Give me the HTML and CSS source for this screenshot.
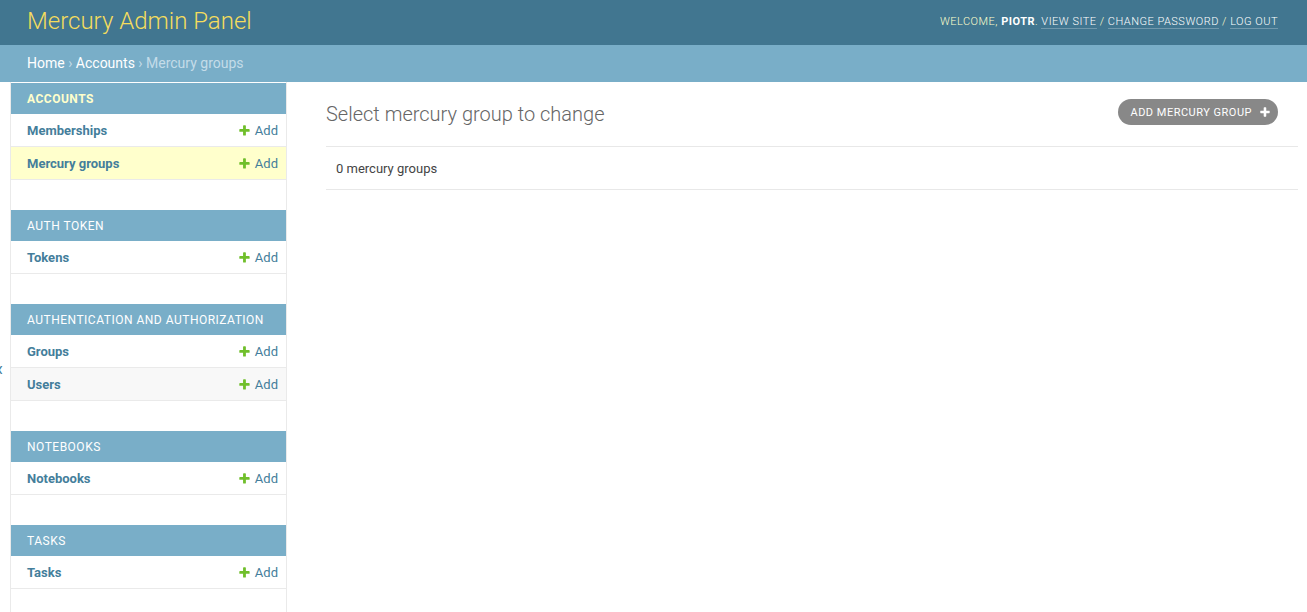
FILE: index.html
```html
<!DOCTYPE html>
<html lang="en">
<head>
<meta charset="utf-8">
<title>Select mercury group to change | Mercury Admin Panel</title>
<link rel="stylesheet" href="styles.css">
</head>
<body>
<div class="page">
  <header class="header">
    <h1 class="branding">Mercury Admin Panel</h1>
    <div class="user-tools">
      Welcome, <strong>piotr</strong>.
      <a href="#">View site</a> /
      <a href="#">Change password</a> /
      <a href="#">Log out</a>
    </div>
  </header>
  <nav class="breadcrumbs">
    <a href="#">Home</a> › <a href="#">Accounts</a> › <span class="current">Mercury groups</span>
  </nav>
  <div class="main">
    <div class="toggle-strip"><button class="toggle">«</button></div>
    <aside class="sidebar">
      <div class="module">
        <div class="caption current-app">Accounts</div>
        <div class="row"><a class="model" href="#">Memberships</a><a class="addlink" href="#"><svg class="plus" viewBox="150 150 1500 1500"><path d="M1600 796v192q0 40-28 68t-68 28h-416v416q0 40-28 68t-68 28h-192q-40 0-68-28t-28-68v-416h-416q-40 0-68-28t-28-68v-192q0-40 28-68t68-28h416v-416q0-40 28-68t68-28h192q40 0 68 28t28 68v416h416q40 0 68 28t28 68z"/></svg>Add</a></div>
        <div class="row selected"><a class="model" href="#">Mercury groups</a><a class="addlink" href="#"><svg class="plus" viewBox="150 150 1500 1500"><path d="M1600 796v192q0 40-28 68t-68 28h-416v416q0 40-28 68t-68 28h-192q-40 0-68-28t-28-68v-416h-416q-40 0-68-28t-28-68v-192q0-40 28-68t68-28h416v-416q0-40 28-68t68-28h192q40 0 68 28t28 68v416h416q40 0 68 28t28 68z"/></svg>Add</a></div>
      </div>
      <div class="module">
        <div class="caption">Auth Token</div>
        <div class="row"><a class="model" href="#">Tokens</a><a class="addlink" href="#"><svg class="plus" viewBox="150 150 1500 1500"><path d="M1600 796v192q0 40-28 68t-68 28h-416v416q0 40-28 68t-68 28h-192q-40 0-68-28t-28-68v-416h-416q-40 0-68-28t-28-68v-192q0-40 28-68t68-28h416v-416q0-40 28-68t68-28h192q40 0 68 28t28 68v416h416q40 0 68 28t28 68z"/></svg>Add</a></div>
      </div>
      <div class="module">
        <div class="caption">Authentication and Authorization</div>
        <div class="row"><a class="model" href="#">Groups</a><a class="addlink" href="#"><svg class="plus" viewBox="150 150 1500 1500"><path d="M1600 796v192q0 40-28 68t-68 28h-416v416q0 40-28 68t-68 28h-192q-40 0-68-28t-28-68v-416h-416q-40 0-68-28t-28-68v-192q0-40 28-68t68-28h416v-416q0-40 28-68t68-28h192q40 0 68 28t28 68v416h416q40 0 68 28t28 68z"/></svg>Add</a></div>
        <div class="row alt"><a class="model" href="#">Users</a><a class="addlink" href="#"><svg class="plus" viewBox="150 150 1500 1500"><path d="M1600 796v192q0 40-28 68t-68 28h-416v416q0 40-28 68t-68 28h-192q-40 0-68-28t-28-68v-416h-416q-40 0-68-28t-28-68v-192q0-40 28-68t68-28h416v-416q0-40 28-68t68-28h192q40 0 68 28t28 68v416h416q40 0 68 28t28 68z"/></svg>Add</a></div>
      </div>
      <div class="module">
        <div class="caption">Notebooks</div>
        <div class="row"><a class="model" href="#">Notebooks</a><a class="addlink" href="#"><svg class="plus" viewBox="150 150 1500 1500"><path d="M1600 796v192q0 40-28 68t-68 28h-416v416q0 40-28 68t-68 28h-192q-40 0-68-28t-28-68v-416h-416q-40 0-68-28t-28-68v-192q0-40 28-68t68-28h416v-416q0-40 28-68t68-28h192q40 0 68 28t28 68v416h416q40 0 68 28t28 68z"/></svg>Add</a></div>
      </div>
      <div class="module">
        <div class="caption">Tasks</div>
        <div class="row"><a class="model" href="#">Tasks</a><a class="addlink" href="#"><svg class="plus" viewBox="150 150 1500 1500"><path d="M1600 796v192q0 40-28 68t-68 28h-416v416q0 40-28 68t-68 28h-192q-40 0-68-28t-28-68v-416h-416q-40 0-68-28t-28-68v-192q0-40 28-68t68-28h416v-416q0-40 28-68t68-28h192q40 0 68 28t28 68v416h416q40 0 68 28t28 68z"/></svg>Add</a></div>
      </div>
    </aside>
    <main class="content">
      <div class="title-row">
        <h1 class="page-title">Select mercury group to change</h1>
        <a class="tool-add" href="#">Add mercury group<svg class="tool-plus" viewBox="150 150 1500 1500"><path d="M1600 796v192q0 40-28 68t-68 28h-416v416q0 40-28 68t-68 28h-192q-40 0-68-28t-28-68v-416h-416q-40 0-68-28t-28-68v-192q0-40 28-68t68-28h416v-416q0-40 28-68t68-28h192q40 0 68 28t28 68v416h416q40 0 68 28t28 68z"/></svg></a>
      </div>
      <p class="paginator">0 mercury groups</p>
    </main>
  </div>
</div>
</body>
</html>
```
FILE: styles.css
```css
* { box-sizing: border-box; }
html, body { margin: 0; padding: 0; }
body {
  font-family: Roboto, "Liberation Sans", sans-serif;
  color: #333;
  background: #fff;
  font-size: 14px;
}
a { text-decoration: none; }
.page {
  display: flex;
  flex-direction: column;
  min-height: 100vh;
}
.header {
  background: #417690;
  height: 45px;
  padding: 0 29px 0 27px;
  display: flex;
  align-items: center;
  justify-content: space-between;
}
.branding {
  margin: 0;
  font-size: 24px;
  font-weight: 300;
  line-height: 25px;
  color: #f5dd5d;
  position: relative;
  top: -1px;
}
.user-tools {
  font-size: 11px;
  font-weight: 300;
  letter-spacing: 0.5px;
  text-transform: uppercase;
  color: #ffc;
  line-height: 14px;
  margin-top: -2px;
}
.user-tools strong { font-weight: 700; color: #fff; }
.user-tools a {
  color: #fff;
  border-bottom: 1px solid rgba(255,255,255,0.25);
}
.breadcrumbs {
  background: #79aec8;
  height: 37px;
  padding: 10px 27px;
  font-size: 14px;
  line-height: 17px;
  color: #c4dce8;
}
.breadcrumbs a { color: #fff; }
.breadcrumbs .current { color: #c4dce8; }
.main {
  flex: 1;
  display: flex;
}
.toggle-strip {
  flex: 0 0 11px;
  overflow: hidden;
  border-right: 1px solid #eaeaea;
  display: flex;
  padding-top: 36px;
}
.toggle {
  flex: 0 0 23px;
  margin-left: -13px;
  border: 0;
  background: #fff;
  padding: 0;
  font-family: Roboto, "Liberation Sans", sans-serif;
  font-size: 20px;
  color: #447e9b;
  display: flex;
  align-items: center;
  justify-content: center;
}
.sidebar {
  flex: 0 0 276px;
  border-right: 1px solid #eaeaea;
  padding-top: 1px;
}
.module { margin-bottom: 30px; }
.caption {
  background: #79aec8;
  color: #fff;
  font-size: 12px;
  line-height: 15px;
  padding: 9px 8px 7px 16px;
  text-transform: uppercase;
  letter-spacing: 0.5px;
  font-weight: 400;
  white-space: nowrap;
}
.caption.current-app {
  color: #ffc;
  font-weight: 700;
}
.row {
  display: flex;
  justify-content: space-between;
  align-items: center;
  padding: 9px 8px 7px 16px;
  line-height: 16px;
  font-size: 13px;
  border-bottom: 1px solid #eaeaea;
}
.row.selected { background: #ffc; }
.row.alt { background: #f8f8f8; }
.model {
  color: #447e9b;
  font-weight: 700;
}
.addlink {
  color: #447e9b;
  display: flex;
  align-items: center;
}
.plus {
  width: 11px;
  height: 11px;
  margin-right: 5px;
  margin-top: -1px;
  fill: #70bf2b;
}
.content {
  flex: 1;
  padding: 20px 9px 0 39px;
}
.title-row {
  display: flex;
  justify-content: space-between;
  align-items: flex-start;
  margin-bottom: 20px;
}
.page-title {
  margin: 0;
  font-size: 20px;
  font-weight: 300;
  line-height: 24px;
  color: #666;
}
.tool-add {
  margin-top: -3px;
  margin-right: 20px;
  height: 26px;
  display: flex;
  align-items: center;
  padding: 0 8px 0 12px;
  background: #888;
  color: #fff;
  font-size: 11px;
  letter-spacing: 0.5px;
  text-transform: uppercase;
  border-radius: 15px;
}
.tool-plus {
  width: 10px;
  height: 10px;
  fill: #fff;
  margin-left: 8px;
}
.paginator {
  margin: 0;
  font-size: 13px;
  line-height: 22px;
  padding: 11px 10px 9px;
  border-top: 1px solid #e8e8e8;
  border-bottom: 1px solid #e8e8e8;
  color: #444;
}
```
